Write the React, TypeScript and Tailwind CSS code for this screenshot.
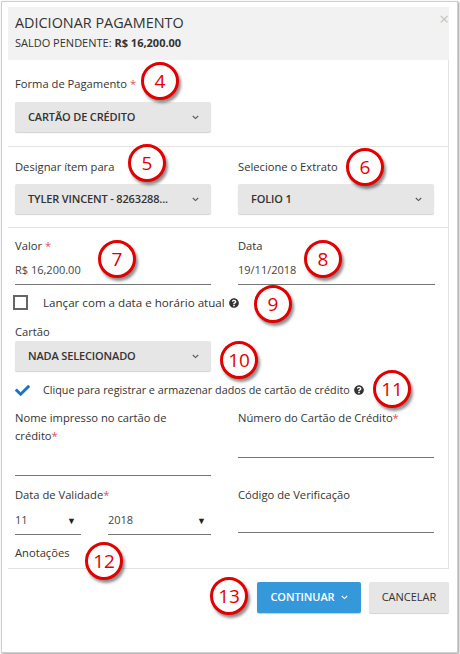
import React from "react";
import { FaQuestionCircle, FaCheck } from "react-icons/fa";

const font = { fontFamily: '"Open Sans", "Liberation Sans", sans-serif' };

function Chevron({ color = "#555" }: { color?: string }) {
  return (
    <svg width="7" height="5" viewBox="0 0 7 5" className="shrink-0">
      <path d="M0.8 1 L3.5 3.6 L6.2 1" fill="none" stroke={color} strokeWidth="1.1" />
    </svg>
  );
}

function Select({ text }: { text: string }) {
  return (
    <div className="h-[30px] w-[196px] bg-[#e6e6e6] rounded-[2px] shadow-[0_1px_1px_rgba(0,0,0,0.18)] flex items-center justify-between pl-[13px] pr-[12px]">
      <span className="text-[11px] font-semibold text-[#333] tracking-[-0.15px] whitespace-nowrap">{text}</span>
      <Chevron />
    </div>
  );
}

function Label({ children }: { children: React.ReactNode }) {
  return <div className="text-[11.2px] leading-[18px] text-[#333]">{children}</div>;
}

function Star() {
  return <span className="text-[#e0525a]">*</span>;
}

function Marker({ n, x, y }: { n: string; x: number; y: number }) {
  return (
    <div
      className="absolute w-[38px] h-[38px] rounded-full bg-white border-[3px] border-[#e30000] shadow-[2px_3px_3px_rgba(0,0,0,0.45)] flex items-center justify-center text-[19px] text-[#e30000] leading-none"
      style={{ left: x - 19, top: y - 19 }}
    >
      {n}
    </div>
  );
}

export default function App() {
  return (
    <div className="w-[460px] h-[654px] bg-white pl-[1px] pt-[1px] relative" style={font}>
      <div className="w-[457px] h-[652px] border border-[#cfcfcf] shadow-[1px_1px_2px_rgba(0,0,0,0.4)] pl-[6px] pt-[5px]">
        <div className="w-[441px]">
          {/* Header */}
          <div className="h-[53px] bg-[#f2f2f2] pl-[7px] pt-[6px] relative">
            <div className="text-[14.4px] leading-[20px] text-[#333]">ADICIONAR PAGAMENTO</div>
            <div className="text-[11px] leading-[17px] text-[#333] mt-[1px]">
              SALDO PENDENTE: <span className="font-bold">R$ 16,200.00</span>
            </div>
            <div className="absolute right-[0px] top-[2px] text-[17px] leading-[20px] text-[#c4c4c4]">×</div>
          </div>

          {/* Body */}
          <div className="border-r border-b border-[#e3e3e3] h-[509px] overflow-hidden">
            {/* Section 1 */}
            <div className="pl-[7px] pt-[15px] pb-[14px] border-b border-[#e3e3e3]">
              <Label>
                Forma de Pagamento <Star />
              </Label>
              <div className="mt-[9px]">
                <Select text="CARTÃO DE CRÉDITO" />
              </div>
            </div>

            {/* Section 2 */}
            <div className="pl-[7px] pt-[11px] pb-[13px] border-b border-[#e3e3e3] grid grid-cols-[196px_196px] gap-x-[27px]">
              <div>
                <Label>Designar ítem para</Label>
                <div className="mt-[8px]">
                  <Select text="TYLER VINCENT - 8263288..." />
                </div>
              </div>
              <div>
                <Label>Selecione o Extrato</Label>
                <div className="mt-[8px]">
                  <Select text="FOLIO 1" />
                </div>
              </div>
            </div>

            {/* Section 3 */}
            <div className="pl-[7px] pt-[9px]">
              <div className="grid grid-cols-[196px_197px] gap-x-[27px]">
                <div>
                  <Label>
                    Valor <Star />
                  </Label>
                  <div className="mt-[2px] h-[28px] border-b border-[#777] flex items-center text-[11px] text-[#444]">
                    R$ 16,200.00
                  </div>
                </div>
                <div>
                  <Label>Data</Label>
                  <div className="mt-[2px] h-[28px] border-b border-[#777] flex items-center text-[11px] text-[#444]">
                    19/11/2018
                  </div>
                </div>
              </div>

              <div className="mt-[10px] ml-[-2px] h-[15px] flex items-center">
                <div className="w-[15px] h-[15px] border-2 border-[#666] bg-white shrink-0" />
                <span className="ml-[15px] text-[11.6px] text-[#333] whitespace-nowrap">Lançar com a data e horário atual</span>
                <FaQuestionCircle className="ml-[4px] text-[#333]" size={10} />
              </div>

              <div className="mt-[13px]">
                <Label>Cartão</Label>
                <Select text="NADA SELECIONADO" />
              </div>

              <div className="mt-[12px] h-[14px] flex items-center">
                <FaCheck className="text-[#1c75bc] shrink-0" size={15} />
                <span className="ml-[13px] text-[10.8px] text-[#333] whitespace-nowrap">
                  Clique para registrar e armazenar dados de cartão de crédito
                </span>
                <FaQuestionCircle className="ml-[4px] text-[#333]" size={10} />
              </div>

              <div className="mt-[12px] grid grid-cols-[196px_196px] gap-x-[27px] items-start">
                <div>
                  <Label>
                    Nome impresso no cartão de
                    <br />
                    crédito
                    <Star />
                  </Label>
                  <div className="mt-[2px] h-[29px] border-b border-[#777]" />
                </div>
                <div>
                  <Label>
                    Número do Cartão de Crédito
                    <Star />
                  </Label>
                  <div className="mt-[2px] h-[29px] border-b border-[#777]" />
                </div>
              </div>

              <div className="mt-[10px] grid grid-cols-[196px_196px] gap-x-[27px] items-start">
                <div>
                  <Label>
                    Data de Validade
                    <Star />
                  </Label>
                  <div className="mt-[3px] flex gap-x-[27px]">
                    <div className="w-[66px] h-[28px] border-b border-[#777] flex items-center justify-between text-[11px] text-[#444]">
                      <span>11</span>
                      <span className="text-[9px] text-[#222] mr-[5px]">▼</span>
                    </div>
                    <div className="w-[103px] h-[28px] border-b border-[#777] flex items-center justify-between text-[11px] text-[#444]">
                      <span>2018</span>
                      <span className="text-[9px] text-[#222] mr-[5px]">▼</span>
                    </div>
                  </div>
                </div>
                <div>
                  <Label>Código de Verificação</Label>
                  <div className="mt-[1px] h-[28px] border-b border-[#777]" />
                </div>
              </div>

              <div className="mt-[9px]">
                <Label>Anotações</Label>
              </div>
            </div>
          </div>

          {/* Footer */}
          <div className="mt-[13px] flex justify-end gap-x-[8px]">
            <div className="w-[104px] h-[31px] bg-[#3498db] rounded-[2px] shadow-[0_1px_1px_rgba(0,0,0,0.2)] flex items-center justify-center gap-x-[6px] text-white text-[11px] font-semibold tracking-[-0.1px]">
              <span>CONTINUAR</span>
              <Chevron color="#fff" />
            </div>
            <div className="w-[80px] h-[31px] bg-[#e6e6e6] rounded-[2px] shadow-[0_1px_1px_rgba(0,0,0,0.18)] flex items-center justify-center text-[#333] text-[11px]">
              CANCELAR
            </div>
          </div>
        </div>
      </div>

      <Marker n="4" x={160} y={81} />
      <Marker n="5" x={147} y={163} />
      <Marker n="6" x={365} y={167} />
      <Marker n="7" x={117} y={259} />
      <Marker n="8" x={323} y={259} />
      <Marker n="9" x={273} y={304} />
      <Marker n="10" x={239} y={360} />
      <Marker n="11" x={392} y={389} />
      <Marker n="12" x={104} y={561} />
      <Marker n="13" x={229} y={596} />
    </div>
  );
}
